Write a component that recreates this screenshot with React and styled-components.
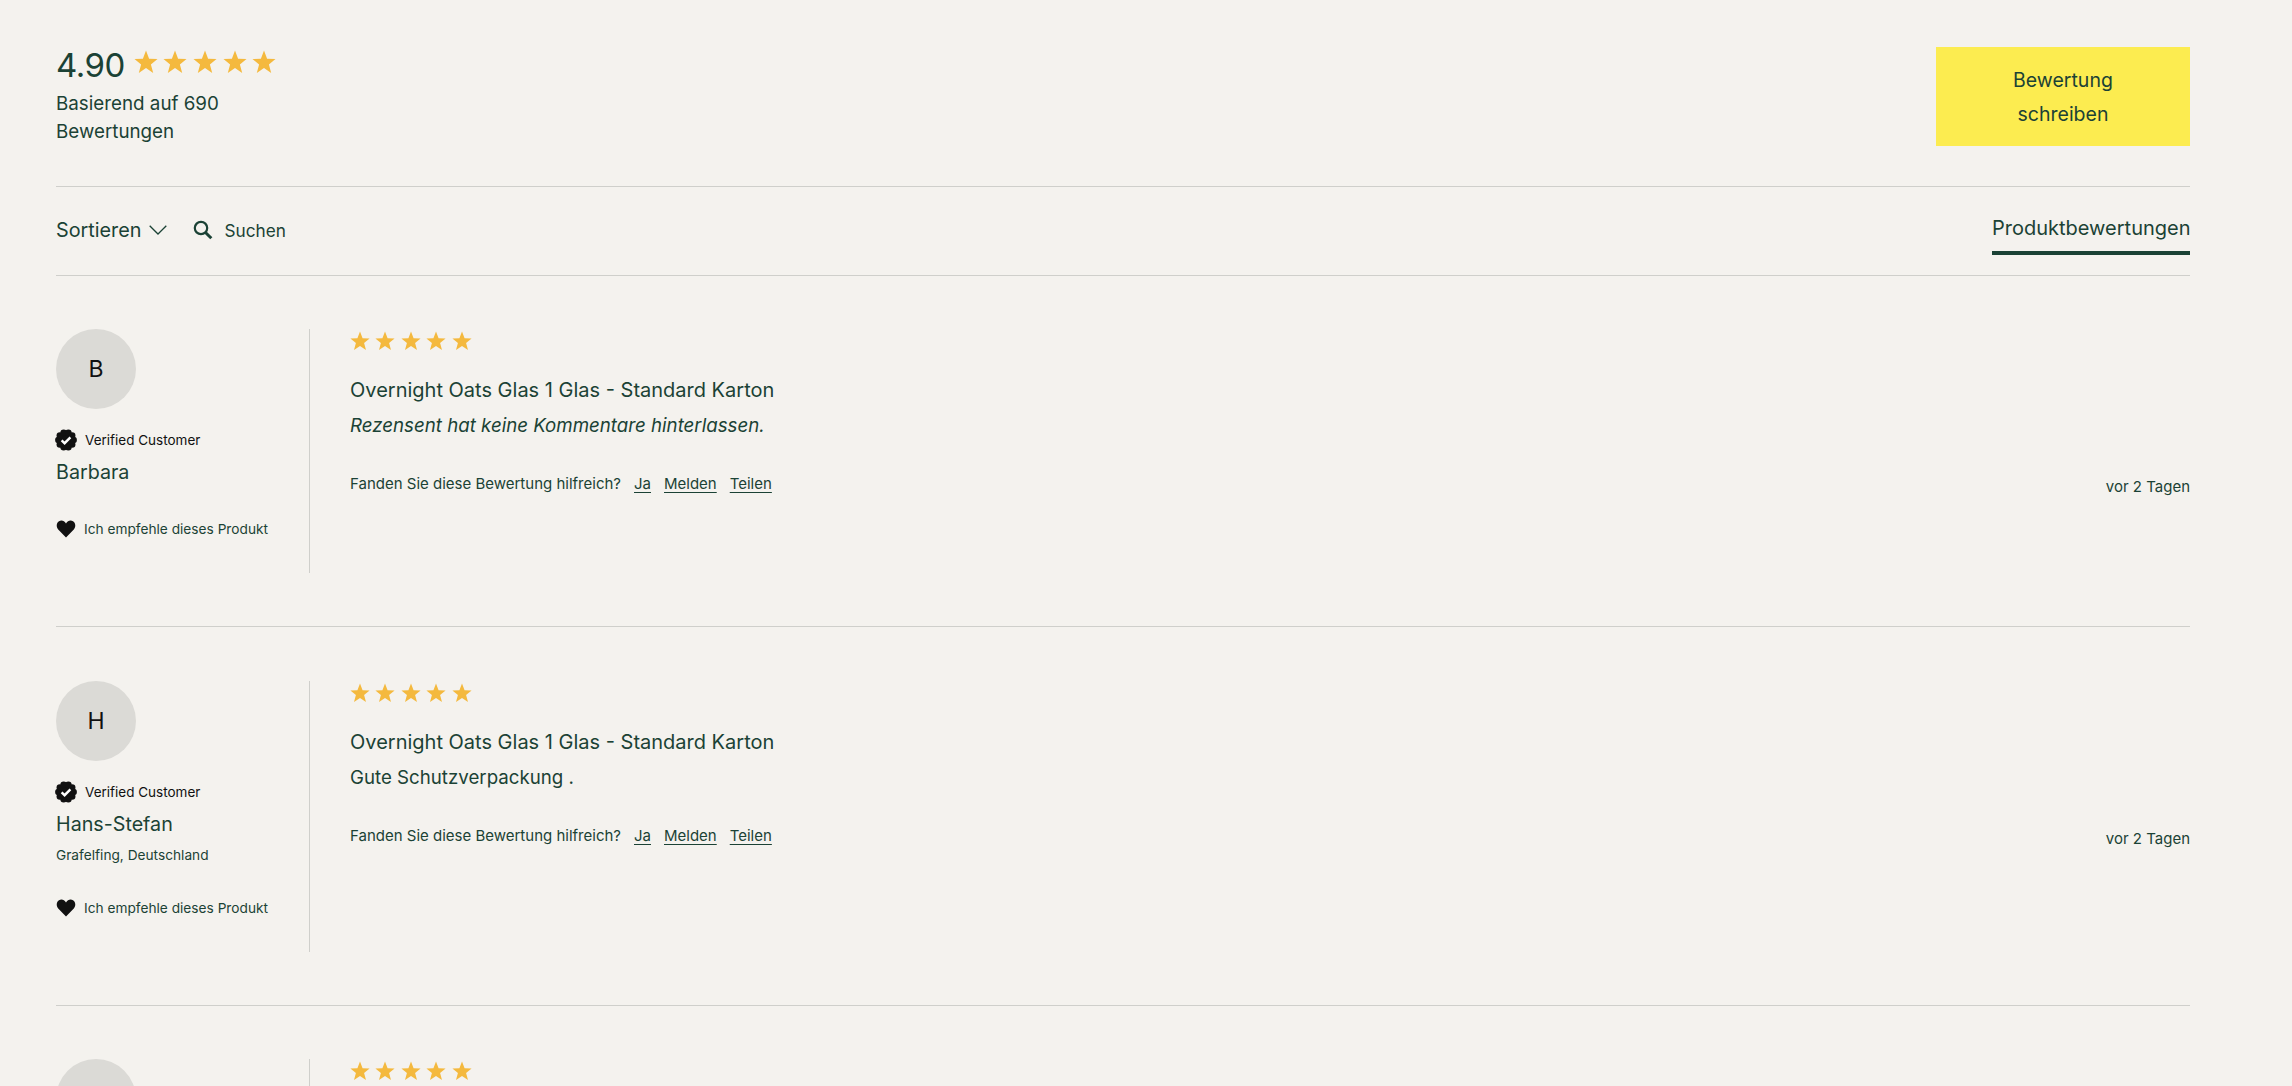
import React from "react";
import styled, { createGlobalStyle } from "styled-components";

const Global = createGlobalStyle`
  html, body { margin: 0; padding: 0; background: #f4f2ee; overflow: hidden; }
  * { box-sizing: border-box; }
`;

const green = "#1b4235";
const font = `"Inter", "Lato", sans-serif`;

const Page = styled.div`
  height: 1086px;
  overflow: hidden;
  padding: 47px 102px 0 56px;
  font-family: ${font};
  color: ${green};
  background: #f4f2ee;
`;
const Header = styled.header`
  display: flex;
  justify-content: space-between;
  align-items: flex-start;
  height: 140px;
  border-bottom: 1px solid #cfcfcb;
`;
const Summary = styled.div`
  width: 240px;
`;
const ScoreRow = styled.div`
  display: flex;
  align-items: center;
  gap: 9px;
  height: 36px;
`;
const Score = styled.span`
  font-size: 33px;
  line-height: 36px;
  letter-spacing: -0.5px;
`;
const StarRow = styled.div`
  display: flex;
  gap: ${(p) => p.$gap}px;
  margin-bottom: ${(p) => p.$lift || 0}px;
`;
const BasedOn = styled.p`
  margin: 7px 0 0;
  font-size: 18.8px;
  line-height: 28px;
  width: 200px;
`;
const WriteButton = styled.button`
  width: 254px;
  height: 99px;
  padding: 0 60px;
  border: 0;
  background: #fcec50;
  color: ${green};
  font: 400 19.5px/34px ${font};
`;
const Toolbar = styled.nav`
  display: flex;
  align-items: center;
  height: 89px;
  padding-bottom: 2px;
  border-bottom: 1px solid #cfcfcb;
`;
const Sort = styled.div`
  display: flex;
  align-items: center;
  gap: 8px;
  font-size: 19.8px;
`;
const Search = styled.div`
  display: flex;
  align-items: center;
  gap: 11px;
  margin-left: 26px;
  font-size: 17.2px;
`;
const Tab = styled.div`
  margin-left: auto;
  align-self: flex-start;
  margin-top: 26px;
  height: 42px;
  width: 198px;
  border-bottom: 4px solid ${green};
  font-size: 20px;
  line-height: 31px;
  white-space: nowrap;
  text-align: right;
`;
const Review = styled.article`
  display: flex;
  padding: ${(p) => p.$top}px 0 53px;
  border-bottom: 1px solid #cfcfcb;
`;
const Author = styled.div`
  width: 254px;
  min-height: ${(p) => p.$h}px;
  border-right: 1px solid #cfcfcb;
`;
const Avatar = styled.div`
  width: 80px;
  height: 80px;
  border-radius: 50%;
  background: #dbdad6;
  color: #111;
  display: flex;
  align-items: center;
  justify-content: center;
  font-size: 23px;
`;
const IconRow = styled.div`
  display: flex;
  align-items: center;
  gap: 8px;
  height: 22px;
  margin-top: ${(p) => p.$mt}px;
  font-size: ${(p) => p.$size}px;
  color: ${(p) => p.$color || green};
  white-space: nowrap;
`;
const Name = styled.div`
  margin-top: 7px;
  font-size: 19.7px;
  line-height: 28px;
`;
const Location = styled.div`
  margin-top: 7px;
  font-size: 13.7px;
  line-height: 20px;
`;
const Body = styled.div`
  flex: 1;
  padding-left: 40px;
`;
const Stars = styled.div`
  padding-top: 2px;
  height: 47px;
`;
const Title = styled.h3`
  margin: 0;
  font-size: 20px;
  font-weight: 400;
  line-height: 28px;
`;
const Comment = styled.p`
  margin: 8px 0 0;
  font-size: 18.7px;
  line-height: 28px;
  font-style: ${(p) => (p.$italic ? "italic" : "normal")};
`;
const Footer = styled.div`
  display: flex;
  justify-content: space-between;
  margin-top: 34px;
  font-size: 15px;
  line-height: 20px;
`;
const Helpful = styled.div`
  display: flex;
  gap: 13px;
`;
const Action = styled.a`
  color: ${green};
  text-decoration: underline;
  text-underline-offset: 3px;
`;
const Ago = styled.span`
  margin-top: 3px;
`;

const Star = ({ size }) => (
  <svg width={size} height={size} viewBox="0 0 24 24" aria-hidden="true">
    <path fill="#f4b93e" d="M12 .6l3.100 8.100 8.400.4-6.600 5.400 2.300 8.400L12 18l-7.200 4.900 2.300-8.400L.5 9.100l8.400-.4z" />
  </svg>
);
const Rating = ({ size, gap, lift }) => (
  <StarRow $gap={gap} $lift={lift}>
    {[0, 1, 2, 3, 4].map((i) => (
      <Star key={i} size={size} />
    ))}
  </StarRow>
);
const Badge = () => {
  const lobes = Array.from({ length: 10 }, (_, i) => {
    const a = (i / 10) * Math.PI * 2;
    return { x: 11 + 7.6 * Math.cos(a), y: 11 + 7.6 * Math.sin(a) };
  });
  return (
    <svg width="22" height="22" viewBox="0 0 22 22" aria-hidden="true" style={{ marginLeft: -1 }}>
      <circle cx="11" cy="11" r="8.500" fill="#111" />
      {lobes.map((l, i) => (
        <circle key={i} cx={l.x} cy={l.y} r="3.300" fill="#111" />
      ))}
      <path d="M6.600 11.300l3 2.900 5.800-5.900" fill="none" stroke="#fff" strokeWidth="2.400" />
    </svg>
  );
};
const Heart = () => (
  <svg width="20" height="20" viewBox="0 0 20 20" aria-hidden="true">
    <path fill="#111" d="M10 18.600L2.200 10.400C-.1 7.800.4 3.600 3 2.200c2.700-1.400 5.500-.2 7 2.300 1.500-2.500 4.300-3.700 7-2.300 2.600 1.400 3.100 5.600.8 8.200z" />
  </svg>
);
const Chevron = () => (
  <svg width="18" height="10" viewBox="0 0 18 10" aria-hidden="true">
    <path d="M.7.8L9 9l8.300-8.200" fill="none" stroke={green} strokeWidth="1.300" />
  </svg>
);
const SearchIcon = () => (
  <svg width="20" height="20" viewBox="0 0 20 20" aria-hidden="true">
    <circle cx="8" cy="8" r="6.200" fill="none" stroke={green} strokeWidth="2.200" />
    <path d="M12.500 12.500l5.800 5.800" stroke={green} strokeWidth="3" />
  </svg>
);

const reviews = [
  { id: 1, top: 53, letter: "B", name: "Barbara", h: 244, comment: "Rezensent hat keine Kommentare hinterlassen.", italic: true },
  { id: 2, top: 54, letter: "H", name: "Hans-Stefan", h: 271, location: "Grafelfing, Deutschland", comment: "Gute Schutzverpackung ." },
  { id: 3, top: 53, h: 244 },
];

export default function App() {
  return (
    <Page>
      <Global />
      <Header>
        <Summary>
          <ScoreRow>
            <Score>4.90</Score>
            <Rating size={24} gap={5.600} lift={7} />
          </ScoreRow>
          <BasedOn>Basierend auf 690 Bewertungen</BasedOn>
        </Summary>
        <WriteButton>Bewertung schreiben</WriteButton>
      </Header>
      <Toolbar>
        <Sort>
          Sortieren <Chevron />
        </Sort>
        <Search>
          <SearchIcon /> Suchen
        </Search>
        <Tab>Produktbewertungen</Tab>
      </Toolbar>
      {reviews.map((r) => (
        <Review key={r.id} $top={r.top}>
          <Author $h={r.h}>
            <Avatar>{r.letter}</Avatar>
            {r.name && (
              <>
                <IconRow $mt={20} $size={13.500} $color="#111">
                  <Badge /> Verified Customer
                </IconRow>
                <Name>{r.name}</Name>
                {r.location && <Location>{r.location}</Location>}
                <IconRow $mt={32} $size={13.700}>
                  <Heart /> Ich empfehle dieses Produkt
                </IconRow>
              </>
            )}
          </Author>
          <Body>
            <Stars>
              <Rating size={20} gap={5.400} />
            </Stars>
            {r.name && (
              <>
                <Title>Overnight Oats Glas 1 Glas - Standard Karton</Title>
                <Comment $italic={r.italic}>{r.comment}</Comment>
                <Footer>
                  <Helpful>
                    <span>Fanden Sie diese Bewertung hilfreich?</span>
                    <Action>Ja</Action>
                    <Action>Melden</Action>
                    <Action>Teilen</Action>
                  </Helpful>
                  <Ago>vor 2 Tagen</Ago>
                </Footer>
              </>
            )}
          </Body>
        </Review>
      ))}
    </Page>
  );
}
